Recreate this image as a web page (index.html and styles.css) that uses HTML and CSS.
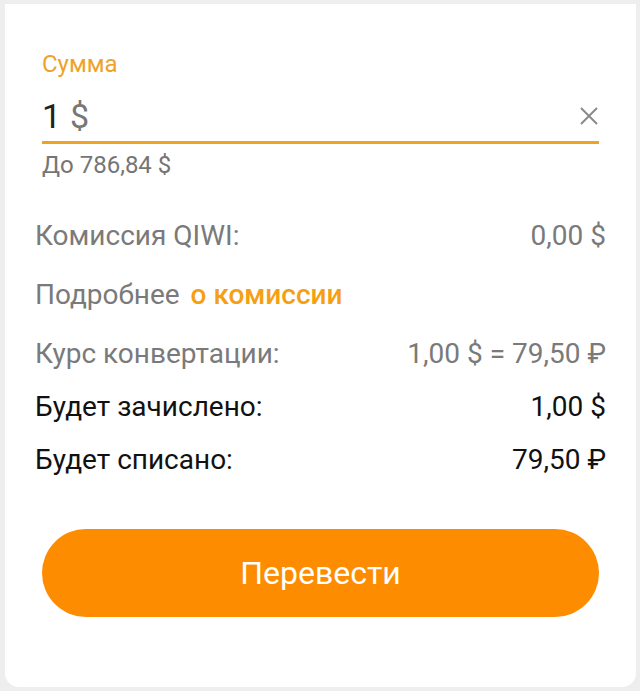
FILE: index.html
```html
<!DOCTYPE html>
<html lang="ru">
<head>
<meta charset="utf-8">
<title>Перевод</title>
<link rel="stylesheet" href="styles.css">
</head>
<body>
<div class="card">
  <div class="field">
    <div class="field-label">Сумма</div>
    <div class="field-input">
      <span class="amount">1</span><span class="currency">$</span>
      <svg class="clear" width="20" height="20" viewBox="0 0 20 20" aria-hidden="true">
        <path d="M2 2 L18 18 M18 2 L2 18" stroke="#8a8a8a" stroke-width="2" fill="none"/>
      </svg>
    </div>
    <div class="field-hint">До 786,84 $</div>
  </div>

  <div class="rows">
    <div class="row muted"><span>Комиссия QIWI:</span><span>0,00 $</span></div>
    <div class="row muted"><span>Подробнее <a class="link" href="#">о комиссии</a></span></div>
    <div class="row muted tight"><span>Курс конвертации:</span><span>1,00 $ = 79,50 ₽</span></div>
    <div class="row dark tight"><span>Будет зачислено:</span><span>1,00 $</span></div>
    <div class="row dark tight"><span>Будет списано:</span><span>79,50 ₽</span></div>
  </div>

  <button class="submit" type="button">Перевести</button>
</div>
</body>
</html>
```

FILE: styles.css
```css
html, body {
  margin: 0;
  padding: 0;
}
body {
  background: #eeeeee;
  font-family: Roboto, "Noto Sans", "Liberation Sans", sans-serif;
  height: 691px;
  overflow: hidden;
}
.card {
  margin: 4px 4px 0 5px;
  height: 683px;
  box-sizing: border-box;
  background: #ffffff;
  border-radius: 0 0 14px 14px;
  padding: 46px 30px 0 30px;
}
.field {
  padding: 0 7px;
}
.field-label {
  color: #efa228;
  font-size: 24px;
  line-height: 28px;
}
.field-input {
  display: flex;
  align-items: center;
  height: 53px;
  border-bottom: 3px solid #f0a323;
  box-sizing: border-box;
  margin-top: 13px;
}
.amount {
  font-size: 34px;
  color: #222222;
}
.currency {
  font-size: 34px;
  color: #777777;
  margin-left: 9px;
}
.clear {
  margin-left: auto;
  margin-right: 0;
}
.field-hint {
  margin-top: 7px;
  font-size: 24px;
  line-height: 28px;
  color: #757575;
}
.rows {
  margin-top: 40px;
}
.row {
  display: flex;
  justify-content: space-between;
  font-size: 28px;
  line-height: 34px;
  margin-bottom: 25px;
}
.row.tight {
  margin-bottom: 19px;
}
.muted {
  color: #7a7a7a;
}
.dark {
  color: #111111;
}
.link {
  color: #f5a014;
  font-weight: 500;
  text-decoration: none;
  margin-left: 4px;
}
.submit {
  display: block;
  width: calc(100% - 14px);
  margin: 52px 7px 0;
  height: 88px;
  border: none;
  border-radius: 44px;
  background: #fd8c00;
  color: #ffffff;
  font-family: Roboto, "Noto Sans", sans-serif;
  font-size: 32px;
}
```
